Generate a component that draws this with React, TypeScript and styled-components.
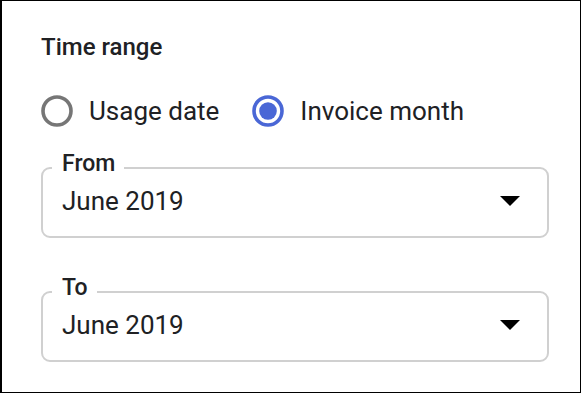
import styled, { createGlobalStyle } from "styled-components";

const GlobalStyle = createGlobalStyle`
  html, body {
    margin: 0;
    padding: 0;
    background: #fff;
  }
  body {
    font-family: Roboto, "Liberation Sans", Arial, sans-serif;
    color: #202124;
  }
`;

const Card = styled.div`
  box-sizing: border-box;
  width: 581px;
  height: 393px;
  border: 1px solid #000;
  border-left-width: 2px;
  padding: 32px 32px 0 39px;
  display: flex;
  flex-direction: column;
  background: #fff;
`;

const Title = styled.div`
  font-size: 24px;
  font-weight: 500;
  line-height: 28px;
  color: #202124;
`;

const RadioRow = styled.div`
  display: flex;
  align-items: center;
  gap: 33px;
  margin-top: 34px;
  height: 32px;
`;

const RadioItem = styled.label`
  display: flex;
  align-items: center;
  gap: 16px;
  font-size: 26px;
  line-height: 32px;
  color: #202124;
  cursor: pointer;
`;

const Field = styled.fieldset<{ $first?: boolean }>`
  margin: ${({ $first }) => ($first ? "23px" : "36px")} 0 0 0;
  width: 508px;
  box-sizing: border-box;
  border: 2px solid #d0d0d0;
  border-radius: 9px;
  padding: 0 27px 19px 19px;
  min-width: 0;
`;

const Legend = styled.legend`
  font-size: 23px;
  font-weight: 500;
  line-height: 28px;
  padding: 0 9px 7px 10px;
  margin-left: -10px;
  color: #202124;
`;

const ValueRow = styled.div`
  display: flex;
  align-items: center;
  justify-content: space-between;
  height: 32px;
`;

const Value = styled.span`
  font-size: 26px;
  line-height: 32px;
  color: #202124;
`;

function RadioIcon({ checked }: { checked: boolean }) {
  const color = checked ? "#4a67d6" : "#767676";
  return (
    <svg width="32" height="32" viewBox="0 0 32 32">
      <circle cx="16" cy="16" r="14" fill="none" stroke={color} strokeWidth="3.6" />
      {checked && <circle cx="16" cy="16" r="8.8" fill={color} />}
    </svg>
  );
}

function Arrow() {
  return (
    <svg width="20" height="10" viewBox="0 0 20 10">
      <path d="M0 0 L20 0 L10 10 Z" fill="#000" />
    </svg>
  );
}

export default function App() {
  return (
    <>
      <GlobalStyle />
      <Card>
        <Title>Time range</Title>
        <RadioRow>
          <RadioItem>
            <RadioIcon checked={false} />
            Usage date
          </RadioItem>
          <RadioItem>
            <RadioIcon checked />
            Invoice month
          </RadioItem>
        </RadioRow>
        <Field $first>
          <Legend>From</Legend>
          <ValueRow>
            <Value>June 2019</Value>
            <Arrow />
          </ValueRow>
        </Field>
        <Field>
          <Legend>To</Legend>
          <ValueRow>
            <Value>June 2019</Value>
            <Arrow />
          </ValueRow>
        </Field>
      </Card>
    </>
  );
}
